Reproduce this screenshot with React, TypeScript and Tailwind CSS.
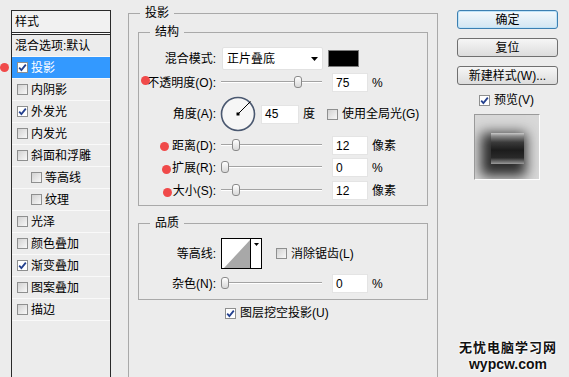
import React from "react";

function Box({ checked = false, className = "" }: { checked?: boolean; className?: string }) {
  return (
    <span
      className={`inline-flex items-center justify-center w-[11px] h-[11px] shrink-0 border border-[#8e8f8f] ${
        checked ? "bg-white" : "bg-linear-to-br from-[#d2d2d2] to-[#f8f8f8]"
      } ${className}`}
    >
      {checked && (
        <svg width="9" height="9" viewBox="0 0 9 9">
          <path d="M1.2 4.6 L3.4 7 L7.8 1.6" stroke="#23408e" strokeWidth="1.8" fill="none" />
        </svg>
      )}
    </span>
  );
}

function Slider({ pos }: { pos: number }) {
  return (
    <div className="relative w-[101px] h-[19px] shrink-0 ml-[5px]">
      <div className="absolute left-0 right-0 top-[8px] h-[1px] bg-[#a3a3a3]" />
      <div className="absolute left-0 right-0 top-[9px] h-[1px] bg-white" />
      <div
        className="absolute top-[3px] w-[8px] h-[12px] rounded-[3px] border border-[#8a8a8a] bg-linear-to-b from-white to-[#d8d8d8]"
        style={{ left: pos }}
      />
    </div>
  );
}

function Num({ v }: { v: string }) {
  return (
    <div className="ml-[10px] w-[36px] h-[19px] shrink-0 bg-white border border-[#e4e4e4] pl-[3px] flex items-center text-[12px]">
      {v}
    </div>
  );
}

function Label({ children }: { children: React.ReactNode }) {
  return <span className="w-[77px] shrink-0 text-right whitespace-nowrap">{children}</span>;
}

const rows: { t: string; c?: boolean; sel?: boolean; ind?: boolean }[] = [
  { t: "投影", c: true, sel: true },
  { t: "内阴影" },
  { t: "外发光", c: true },
  { t: "内发光" },
  { t: "斜面和浮雕" },
  { t: "等高线", ind: true },
  { t: "纹理", ind: true },
  { t: "光泽" },
  { t: "颜色叠加" },
  { t: "渐变叠加", c: true },
  { t: "图案叠加" },
  { t: "描边" },
];

function Dot({ className }: { className: string }) {
  return <div className={`absolute w-[9px] h-[9px] rounded-full bg-[#f04a4a] ${className}`} />;
}

export default function App() {
  return (
    <div className="w-[569px] h-[377px] overflow-hidden bg-[#ececec] relative flex items-start font-['Liberation_Sans','Noto_Sans_CJK_SC',sans-serif] text-[12px] text-black">
      {/* Left styles list */}
      <div className="ml-[11px] mt-[10px] w-[100px] h-[380px] shrink-0 border border-[#2a2a2a] bg-[#ececec]">
        <div className="h-[21px] flex items-center pl-[3px] bg-[#f1f1f1]">样式</div>
        <div className="h-[1px] bg-[#2a2a2a]" />
        <div className="h-[1px] bg-white" />
        <div className="h-[1px] bg-[#2a2a2a]" />
        <div className="h-[22px] flex items-center pl-[3px] border-b border-[#f9f9f9] whitespace-nowrap">混合选项:默认</div>
        {rows.map((r) => (
          <div
            key={r.t}
            className={`h-[22px] flex items-center border-b border-[#f9f9f9] ${r.ind ? "pl-[19px]" : "pl-[5px]"} ${
              r.sel ? "bg-[#3399ff] text-white" : ""
            }`}
          >
            <Box checked={r.c} />
            <span className="ml-[3px]">{r.t}</span>
          </div>
        ))}
      </div>

      {/* Main panel */}
      <div className="ml-[17px] mt-[6px] w-[310px] shrink-0">
        <fieldset className="border border-[#a9a9a9] h-[400px]">
          <legend className="ml-[11px] px-[5px] leading-[15px]">投影</legend>

          <fieldset className="ml-[9px] mt-[4px] w-[290px] border border-[#a9a9a9] pb-[5px]">
            <legend className="ml-[11px] px-[5px] leading-[15px]">结构</legend>

            <div className="mt-[7px] h-[23px] flex items-center">
              <Label>混合模式:</Label>
              <div className="ml-[6px] w-[101px] h-[23px] shrink-0 bg-white rounded-[2px] border border-[#e2e2e2] flex items-center pl-[4px] pr-[4px] justify-between">
                <span>正片叠底</span>
                <svg width="7" height="4" viewBox="0 0 7 4">
                  <path d="M0 0 H7 L3.5 4 Z" fill="#000" />
                </svg>
              </div>
              <div className="ml-[5px] w-[31px] h-[17px] shrink-0 bg-black border border-[#7a7a7a]" />
            </div>

            <div className="mt-[3px] h-[19px] flex items-center">
              <Label>不透明度(O):</Label>
              <Slider pos={73} />
              <Num v="75" />
              <span className="ml-[4px]">%</span>
            </div>

            <div className="mt-[4px] h-[36px] flex items-center">
              <Label>角度(A):</Label>
              <svg className="ml-[4px] shrink-0" width="36" height="36" viewBox="0 0 36 36">
                <circle cx="18" cy="18" r="16.5" fill="#f6f6f6" stroke="#4a5870" strokeWidth="1.6" />
                <line x1="18" y1="18" x2="30.5" y2="5.5" stroke="#000" strokeWidth="1" />
                <rect x="16.5" y="16.5" width="3" height="3" fill="#000" />
              </svg>
              <div className="ml-[5px] w-[38px] h-[19px] shrink-0 bg-white border border-[#e4e4e4] pl-[3px] flex items-center">45</div>
              <span className="ml-[4px]">度</span>
              <Box className="ml-[12px]" />
              <span className="ml-[4px] whitespace-nowrap">使用全局光(G)</span>
            </div>

            <div className="mt-[4px] h-[19px] flex items-center">
              <Label>距离(D):</Label>
              <Slider pos={11} />
              <Num v="12" />
              <span className="ml-[4px]">像素</span>
            </div>

            <div className="mt-[3px] h-[19px] flex items-center">
              <Label>扩展(R):</Label>
              <Slider pos={0} />
              <Num v="0" />
              <span className="ml-[4px]">%</span>
            </div>

            <div className="mt-[4px] h-[19px] flex items-center">
              <Label>大小(S):</Label>
              <Slider pos={11} />
              <Num v="12" />
              <span className="ml-[4px]">像素</span>
            </div>
          </fieldset>

          <fieldset className="ml-[9px] mt-[10px] w-[290px] border border-[#a9a9a9] pb-[6px]">
            <legend className="ml-[11px] px-[5px] leading-[15px]">品质</legend>

            <div className="mt-[7px] h-[31px] flex items-center">
              <Label>等高线:</Label>
              <div className="ml-[5px] w-[41px] h-[31px] shrink-0 border border-black bg-white flex">
                <svg width="28" height="29" viewBox="0 0 28 29" className="shrink-0">
                  <path d="M2 29 L28 1 L28 29 Z" fill="#a8a8a8" />
                </svg>
                <div className="w-[11px] h-[29px] border-l border-black flex justify-center pt-[4px]">
                  <svg width="5" height="3" viewBox="0 0 5 3">
                    <path d="M0 0 H5 L2.5 3 Z" fill="#000" />
                  </svg>
                </div>
              </div>
              <Box className="ml-[14px]" />
              <span className="ml-[4px] whitespace-nowrap">消除锯齿(L)</span>
            </div>

            <div className="mt-[5px] h-[19px] flex items-center">
              <Label>杂色(N):</Label>
              <Slider pos={0} />
              <Num v="0" />
              <span className="ml-[4px]">%</span>
            </div>
          </fieldset>

          <div className="ml-[96px] mt-[6px] h-[14px] flex items-center">
            <Box checked />
            <span className="ml-[4px] whitespace-nowrap">图层挖空投影(U)</span>
          </div>
        </fieldset>
      </div>

      {/* Right column */}
      <div className="ml-[19px] mt-[10px] w-[101px] shrink-0 flex flex-col">
        <button className="h-[19px] rounded-[3px] border border-[#3c7fb1] bg-linear-to-b from-[#f4f9fc] to-[#d3e6f2] shadow-[inset_0_0_0_1px_#bfe3f8] flex items-center justify-center leading-none">
          确定
        </button>
        <button className="mt-[9px] h-[19px] rounded-[3px] border border-[#707070] bg-linear-to-b from-[#f6f6f6] to-[#dcdcdc] flex items-center justify-center leading-none">
          复位
        </button>
        <button className="mt-[9px] h-[19px] rounded-[3px] border border-[#707070] bg-linear-to-b from-[#f6f6f6] to-[#dcdcdc] flex items-center justify-center leading-none whitespace-nowrap">
          新建样式(W)...
        </button>
        <div className="mt-[8px] h-[14px] flex items-center pl-[22px]">
          <Box checked />
          <span className="ml-[4px]">预览(V)</span>
        </div>
        <div className="mt-[7px] ml-[17px] w-[66px] h-[66px] border-t border-l border-[#9a9a9a] border-r border-b border-r-white border-b-white bg-[#d8d8d8] overflow-hidden relative">
          <div className="absolute left-[16px] top-[18px] w-[33px] h-[31px] shadow-[-4px_6px_12px_6px_rgba(0,0,0,0.8)] bg-[linear-gradient(to_bottom,#c9c9c9_0%,#8a8a8a_10%,#3a3a3a_30%,#1c1c1c_55%,#2a2a2a_80%,#9a9a9a_100%)]" />
        </div>
      </div>

      {/* Red marker dots */}
      <Dot className="left-[0px] top-[63px]" />
      <Dot className="left-[141px] top-[76px]" />
      <Dot className="left-[160px] top-[142px]" />
      <Dot className="left-[162px] top-[165px]" />
      <Dot className="left-[163px] top-[188px]" />

      {/* Watermark */}
      <div className="absolute left-[457px] top-[337px] w-[102px] flex flex-col items-center font-bold text-[#111] [text-shadow:0_0_2px_#fff,0_0_2px_#fff,0_0_3px_#fff]">
        <span className="h-[19px] text-[13px] leading-[19px] font-['Noto_Sans_CJK_SC',sans-serif] tracking-[1px]">无忧电脑学习网</span>
        <span className="h-[16px] text-[14px] leading-[16px] font-['Liberation_Sans',sans-serif]">wypcw.com</span>
      </div>
    </div>
  );
}
